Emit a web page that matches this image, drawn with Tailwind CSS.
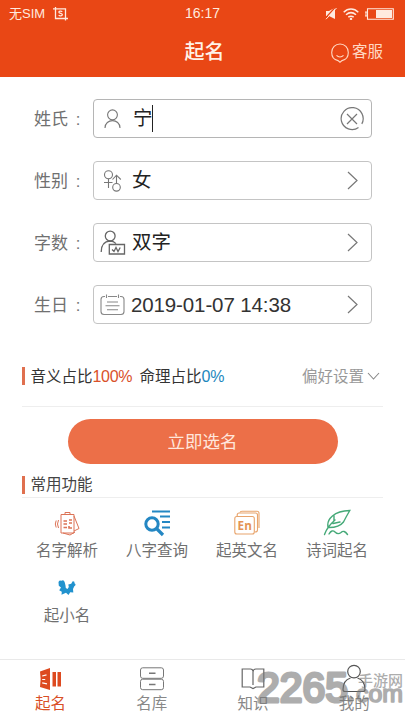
<!DOCTYPE html>
<html lang="zh-CN">
<head>
<meta charset="utf-8">
<meta name="viewport" content="width=device-width, initial-scale=1">
<title>起名</title>
<script src="https://cdn.jsdelivr.net/npm/@tailwindcss/browser@4"></script>
</head>
<body class="bg-white">
<div class="relative flex h-[720px] w-[405px] flex-col overflow-hidden bg-white font-['Roboto','Noto_Sans_CJK_SC',sans-serif] text-[#333]">
  <header class="h-[76.5px] shrink-0 bg-[#e94715] text-white">
    <div class="grid h-[27px] grid-cols-3 items-center pr-[11px] pl-[9px] text-[13px] leading-[27px] font-['Liberation_Sans','Noto_Sans_CJK_SC',sans-serif] text-[#ffeadf]">
      <div class="flex items-center gap-[8px]"><span>无SIM</span>
        <svg class="h-[14px] w-[15px]" viewBox="0 0 15 14" fill="none" stroke="currentColor" stroke-width="1.3"><path d="M0 1.8H12.5V13.5M2.5 0V11.5H15"/><path d="M9.3 4.7C8 3.8 5.8 4.1 5.9 5.3C6 6.6 9.3 6.1 9.3 7.6C9.2 9.1 6.8 9.1 5.6 8.3"/></svg>
      </div>
      <div class="pl-[2px] text-center text-[14px]">16:17</div>
      <div class="flex items-center justify-end gap-[6px]">
        <svg class="h-[13px] w-[12px]" viewBox="0 0 12 13"><path d="M1 4H4L10 0.8V12L4 9H1Z" fill="currentColor"/><path d="M0.5 11L10.5 0" stroke="#e94715" stroke-width="1.2"/><path d="M1 12.2L11.5 1" stroke="currentColor"/></svg>
        <svg class="h-[12px] w-[16px]" viewBox="0 0 16 12" fill="none" stroke="currentColor" stroke-width="1.5"><path d="M0.7 4.2C5 0 11 0 15.3 4.2M3 6.8C6 4.2 10 4.2 13 6.8M5.3 9.1C7 7.9 9 7.9 10.7 9.1"/><circle cx="8" cy="10.9" r=".5"/></svg>
        <svg class="h-[12px] w-[29px]" viewBox="0 0 29 12"><path d="M2.5 .7H28.3V11.3H2.5ZM0 4H2V8H0Z" fill="none" stroke="currentColor" stroke-width="1.1"/><path d="M11 2H27V10H11Z" fill="currentColor"/></svg>
      </div>
    </div>
    <div class="grid h-[49px] grid-cols-3 items-center pt-px pr-[22px] pl-[22px]">
      <span></span>
      <h1 class="pl-[4px] text-center text-[20px] leading-[49px] font-medium text-[#fff3e8]">起名</h1>
      <div class="flex items-center justify-end gap-[3px] text-[15.5px] text-[#ffd9c4]">
        <svg class="h-[20px] w-[18px]" viewBox="0 0 18 20" fill="none" stroke="currentColor" stroke-width="1.1"><path d="M7 17.6C3.2 16.8.7 13.5.7 9.5C.7 4.8 4.3 1 9 1S17.3 4.8 17.3 9.5C17.3 13.5 14.8 16.8 11 17.6L9 19.2Z"/><path d="M5.5 12.3C7.5 14.5 10.5 14.5 12.5 12.3"/></svg><span>客服</span>
      </div>
    </div>
  </header>

  <main class="flex-1">
    <section class="flex flex-col gap-[23px] pt-[22.5px] pr-[33.5px] pl-[34px]">
      <div class="flex h-[39px] items-center">
        <div class="flex w-[59px] shrink-0 pt-[3px] text-[17px] text-[#707070]"><span>姓氏</span><span class="pl-[8px]">:</span></div>
        <div class="flex h-[39px] flex-1 items-center rounded-[4px] border border-[#b5b5b5] text-[19.5px] text-[#222]">
          <svg class="ml-[10px] h-[20px] w-[17px]" viewBox="0 0 17 20" fill="none" stroke="#777" stroke-width="1.1"><circle cx="8.5" cy="5.8" r="4.9"/><path d="M1 19C1 9.2 16 9.2 16 19"/></svg>
          <span class="ml-[12px] pt-px">宁</span><span class="-ml-px h-[27px] w-[1.5px] bg-[#222]"></span>
          <svg class="mr-[7px] ml-auto h-[24px] w-[24px]" viewBox="0 0 24 24" fill="none" stroke="#777" stroke-width="1.2"><path d="M18.5 20.6A11 11 0 1 1 21.8 16.9M7 7L17 17M17 7L7 17"/></svg>
        </div>
      </div>
      <div class="flex h-[39px] items-center">
        <div class="flex w-[59px] shrink-0 pt-[3px] text-[17px] text-[#707070]"><span>性别</span><span class="pl-[8px]">:</span></div>
        <div class="flex h-[39px] flex-1 items-center rounded-[4px] border border-[#c4c4c4] text-[19.5px] text-[#222]">
          <svg class="ml-[9px] h-[22px] w-[19px]" viewBox="0 0 19 22" fill="none" stroke="#777" stroke-width="1.1"><circle cx="5.5" cy="4.8" r="4"/><path d="M5.5 8.8V18M1 12.5H9.5M13.5 14V5.5M9.5 9.5L13.5 5.2L17.8 9.5"/><circle cx="13.5" cy="17.3" r="3.8"/></svg>
          <span class="ml-[10px] pt-px">女</span>
          <svg class="mr-[13px] ml-auto h-[19px] w-[11px]" viewBox="0 0 11 19" fill="none" stroke="#777" stroke-width="1.2"><path d="M1 1L10 9.5L1 18"/></svg>
        </div>
      </div>
      <div class="flex h-[39px] items-center">
        <div class="flex w-[59px] shrink-0 pt-[3px] text-[17px] text-[#707070]"><span>字数</span><span class="pl-[8px]">:</span></div>
        <div class="flex h-[39px] flex-1 items-center rounded-[4px] border border-[#c4c4c4] text-[19.5px] text-[#222]">
          <svg class="ml-[6px] h-[25px] w-[26px]" viewBox="0 0 26 25" fill="none" stroke="#666" stroke-width="1.3"><circle cx="10.2" cy="6" r="4.9"/><path d="M1.2 22C1.2 14.5 5 11.3 10 11C12.5 11 14.5 12 16 13.6"/><path d="M9.3 14.5H24.5V24H9.3Z"/><path d="M12 19.5L14 21.5L16 17.5L18 21.5L20.2 17.5"/></svg>
          <span class="ml-[6px] pt-px">双字</span>
          <svg class="mr-[13px] ml-auto h-[19px] w-[11px]" viewBox="0 0 11 19" fill="none" stroke="#777" stroke-width="1.2"><path d="M1 1L10 9.5L1 18"/></svg>
        </div>
      </div>
      <div class="flex h-[39px] items-center">
        <div class="flex w-[59px] shrink-0 pt-[3px] text-[17px] text-[#707070]"><span>生日</span><span class="pl-[8px]">:</span></div>
        <div class="flex h-[39px] flex-1 items-center rounded-[4px] border border-[#c4c4c4] text-[19.5px] text-[#333]">
          <svg class="ml-[6px] h-[22px] w-[25px]" viewBox="0 0 25 22" fill="none" stroke="#888" stroke-width="1.1"><path d="M5 2.5H4Q1 2.5 1 5.5V17.5Q1 20.5 4 20.5H21Q24 20.5 24 17.5V5.5Q24 2.5 21 2.5H20M8 2.5H17M6.5.5V4M18.5.5V4M7 8H18M5.5 11.8H19.5M7 15.7H18"/></svg>
          <span class="ml-[6px] pt-[2px] font-['Liberation_Sans',sans-serif] text-[20.5px] tracking-[-0.12px]">2019-01-07 14:38</span>
          <svg class="mr-[13px] ml-auto h-[19px] w-[11px]" viewBox="0 0 11 19" fill="none" stroke="#777" stroke-width="1.2"><path d="M1 1L10 9.5L1 18"/></svg>
        </div>
      </div>
    </section>

    <section class="mx-[22px] mt-[22px] flex h-[61px] items-center border-b border-[#eee] text-[15.5px] leading-[20px]">
      <span class="h-[18px] w-[2.5px] bg-[#e0704f]"></span>
      <span class="ml-[6px] pt-[2px]">音义占比</span><span class="w-[40px] pt-[2px] font-['Liberation_Sans',sans-serif] text-[16px] tracking-[-0.3px] text-[#d9512a]">100%</span>
      <span class="ml-[7px] pt-[2px]">命理占比</span><span class="pt-[2px] font-['Liberation_Sans',sans-serif] text-[16px] tracking-[-0.3px] text-[#1c87bd]">0%</span>
      <span class="ml-auto pt-[2px] text-[#999]">偏好设置</span>
      <svg class="mr-[3px] ml-[3px] h-[8px] w-[13px]" viewBox="0 0 13 8" fill="none" stroke="#888" stroke-width="1.1"><path d="M1 1L6.5 7L12 1"/></svg>
    </section>

    <button class="mt-[12px] ml-[67.5px] block h-[45px] w-[270px] rounded-full bg-[#ec6f48] pt-px text-[17.5px] text-[#ffe6dc]">立即选名</button>

    <section class="mx-[22px]">
      <h2 class="mt-[8px] flex h-[26px] items-center border-b border-[#eee] text-[15.5px] leading-[20px] text-[#444]"><span class="mr-[6px] h-[18px] w-[2.5px] bg-[#e0704f]"></span><span class="pt-px">常用功能</span></h2>
      <div class="grid grid-cols-[90px_90px_90px_90px] pt-[11px] text-[15.5px] leading-[22px] text-[#707070]">
        <div class="flex h-[65px] flex-col items-center">
          <svg class="h-[28px] w-[28px]" viewBox="0 0 28 28" fill="none" stroke="#dc7356" stroke-width="1"><path d="M8 5.5H21V24H8ZM12 5.5V3.5H17V5.5M21 7L26 19.5L21 22M10 24L17 26L22 23"/><path d="M10.5 12H14M10.5 15H14M10.5 18.5H14M16 11H19M16 14H19M16 17V19H19" stroke-width="1.6"/><path d="M5.5 11Q3.5 15 5.5 19M3.2 11.5Q1.4 15 3.2 18.5"/></svg>
          <span class="mt-[3px]">名字解析</span>
        </div>
        <div class="flex h-[65px] flex-col items-center">
          <svg class="h-[28px] w-[28px]" viewBox="0 0 28 28" fill="none" stroke="#2487c3"><circle cx="9" cy="15" r="6.2" stroke-width="3"/><path d="M13.5 19.5L20 26" stroke-width="3.2"/><path d="M9 2.5H27M17 7.5H27M19 13H27M19 18.5H27" stroke-width="1.8"/></svg>
          <span class="mt-[3px]">八字查询</span>
        </div>
        <div class="flex h-[65px] flex-col items-center">
          <svg class="h-[28px] w-[28px]" viewBox="0 0 28 28" fill="none" stroke="#e8a46c" stroke-width="1.1"><rect x="1.8" y="7.5" width="19.5" height="17.5" rx="2"/><path d="M4.2 7V6Q4.2 4 6.2 4H22.5Q24.5 4 24.5 6V21Q24.5 23 22 23"/><path d="M7 3.5Q7.2 2.3 9 2.3H24Q26 2.3 26 4.3V19"/><text x="4.6" y="20.5" fill="#e49355" stroke="none" font-family="Open Sans" font-size="11.5" font-weight="700" textLength="14.2" lengthAdjust="spacingAndGlyphs">En</text></svg>
          <span class="mt-[3px]">起英文名</span>
        </div>
        <div class="flex h-[65px] flex-col items-center">
          <svg class="h-[28px] w-[28px]" viewBox="0 0 28 28" fill="none" stroke="#45a978" stroke-width="1.4" stroke-linecap="round"><path d="M1.5 25.5Q4 18 12 11M5 18C3.5 10 11 2 26.8 1.5Q23 8 20.5 13Q16 18.8 5 18.5M11 12V7M10 14.5L17 13M6 25Q9 20 12 23T18 23.5Q21 20.5 24.5 25.5"/></svg>
          <span class="mt-[3px]">诗词起名</span>
        </div>
        <div class="flex h-[65px] flex-col items-center">
          <svg class="h-[28px] w-[28px]" viewBox="0 0 28 28" fill="#2192ce"><path d="M5.5 8.3Q6 5.6 8.2 6.8Q10.8 5 11.7 8.2L12.5 11.4L12.8 14L14.5 15L15.8 13L15.3 10.5L18.2 9.8L19.7 7.2Q22 7 21.5 9.2Q23.7 10.8 21.3 12.2L20 15L20.3 18.5L17.2 18.2L15.5 21L13 18.7L8.5 20.8L8.8 17.7L6.2 16.2L8 13.6L5.8 11.7Z"/></svg>
          <span class="mt-[3px]">起小名</span>
        </div>
      </div>
    </section>
  </main>

  <nav class="grid h-[61px] shrink-0 grid-cols-4 border-t border-[#e9e9e9] bg-white pt-[5px] text-[15.5px] leading-[22px] text-[#888]">
    <div class="flex flex-col items-center text-[#d94f26]">
      <svg class="h-[28px] w-[28px]" viewBox="0 0 28 28" fill="#dd4a20"><path d="M3 6.5L13 3V25L3 22Q4.3 14 3 6.5Z"/><path d="M15.5 7H19V21.5H15.5ZM20.5 7H24V21.5H20.5Z"/><path d="M5.2 11L9.5 9.8M5.2 14.5H8.2M5.2 17.8L10 18.8" stroke="#fff" stroke-width="1.2"/></svg><span>起名</span>
    </div>
    <div class="flex flex-col items-center">
      <svg class="h-[28px] w-[28px]" viewBox="0 0 28 28" fill="none" stroke="#777" stroke-width="1"><rect x="2.5" y="2.8" width="23" height="10.5" rx="2.2"/><rect x="2.5" y="14.2" width="23" height="10.5" rx="2.2"/><path d="M11 8.2H17.5M11 19.6H17.5" stroke-width="1.5"/></svg><span>名库</span>
    </div>
    <div class="flex flex-col items-center">
      <svg class="h-[28px] w-[28px]" viewBox="0 0 28 28" fill="none" stroke="#666" stroke-width="1.2"><path d="M11.5 4H3.2V22H11L14 23.5L17 22H24.8V4H17Q14 4 14 7V20M11.5 4Q13.5 4 14 6"/></svg><span>知识</span>
    </div>
    <div class="flex flex-col items-center">
      <svg class="h-[28px] w-[28px] overflow-visible" viewBox="0 0 28 28" fill="none" stroke="#555" stroke-width="1.2"><circle cx="14" cy="6.6" r="6.3"/><path d="M10.5 13C5.5 14.5 3 18.5 3 24.5Q3 26.5 5 26.5H23Q25 26.5 25 24.5C25 18.5 22.5 14.5 17.5 13"/></svg><span>我的</span>
    </div>
  </nav>

  <svg class="pointer-events-none absolute right-0 bottom-0 h-[61px] w-[155px] opacity-60" viewBox="250 659 155 61" fill="#777" stroke="#777" stroke-linejoin="round">
    <text x="257" y="702" font-family="Liberation Sans" font-size="42" textLength="91" lengthAdjust="spacingAndGlyphs" stroke-width="3.2">2265</text>
    <circle cx="351" cy="699.5" r="2.6"/>
    <text x="356" y="702" font-family="Liberation Sans" font-size="24" textLength="47" lengthAdjust="spacingAndGlyphs" stroke-width="1.6">com</text>
    <text x="358" y="686" font-family="Noto Sans CJK SC" font-weight="500" font-size="15" textLength="45" lengthAdjust="spacingAndGlyphs" stroke="none">手游网</text>
  </svg>
</div>
</body>
</html>
